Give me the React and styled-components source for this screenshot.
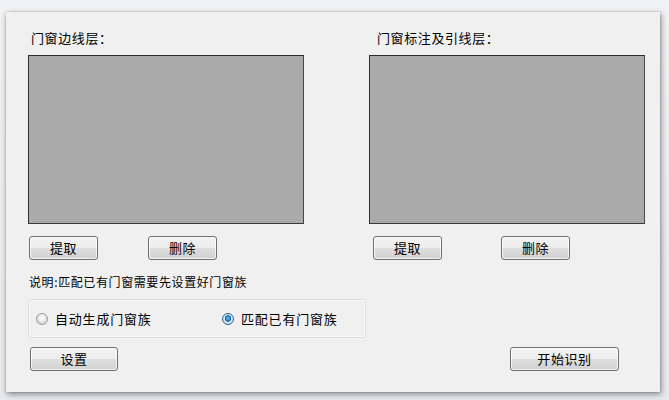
import React from "react"
import styled, { createGlobalStyle } from "styled-components"

const GlobalStyle = createGlobalStyle`
  html, body {
    margin: 0;
    padding: 0;
    background: #eceef1;
    font-family: "Noto Sans CJK SC", "Noto Sans", sans-serif;
    color: #000;
  }
  * {
    box-sizing: border-box;
  }
`

const Page = styled.div`
  width: 669px;
  height: 400px;
  padding: 12px 0 0 6px;
  background: linear-gradient(180deg, #f1f2f4 0%, #e8e9ec 100%);
`

const Window = styled.div`
  width: 654px;
  height: 380px;
  padding: 19px 0 0 22px;
  background: #f0f0f0;
  box-shadow: 1px 2px 6px rgba(0, 0, 0, 0.45), 0 0 1px rgba(0, 0, 0, 0.3);
  display: flex;
  flex-direction: column;
`

const Columns = styled.div`
  display: grid;
  grid-template-columns: 276px 276px;
  column-gap: 65px;
`

const Column = styled.div`
  display: flex;
  flex-direction: column;
`

const Label = styled.div`
  font-size: 13px;
  letter-spacing: 0.6px;
  line-height: 14px;
  height: 14px;
  padding-left: ${p => p.$indent}px;
  margin-bottom: 10px;
  white-space: nowrap;
`

const LayerBox = styled.div`
  height: 169px;
  background: #aaaaaa;
  border: 1px solid #2e2e2e;
  border-right-color: #4a4a4a;
  border-bottom-color: #3a3a3a;
`

const ButtonRow = styled.div`
  display: flex;
  margin-top: 12px;
  padding-left: ${p => p.$indent}px;
  gap: ${p => p.$gap}px;
`

const Button = styled.button`
  width: ${p => p.$w || 69}px;
  height: 24px;
  padding: 0;
  border: 1px solid #707070;
  border-radius: 3px;
  background: linear-gradient(
    180deg,
    #f4f4f4 0%,
    #ececec 48%,
    #dedede 52%,
    #d2d2d2 100%
  );
  box-shadow: inset 0 0 0 1px rgba(255, 255, 255, 0.7);
  font-family: "Noto Sans CJK SC", "Noto Sans", sans-serif;
  font-size: 13px;
  letter-spacing: 0.6px;
  line-height: 22px;
  color: #000;
  text-align: center;
`

const Note = styled.div`
  margin-top: 15px;
  font-size: 12px;
  letter-spacing: 0.6px;
  line-height: 14px;
  height: 14px;
  padding-left: 1px;
  white-space: nowrap;
`

const GroupBox = styled.div`
  margin-top: 10px;
  width: 338px;
  height: 39px;
  border: 1px solid #d9e1e8;
  border-radius: 3px;
  box-shadow: inset 0 0 0 1px #f8f9fa;
  display: grid;
  grid-template-columns: 186px auto;
  align-items: center;
  padding-left: 7px;
`

const RadioItem = styled.label`
  display: flex;
  align-items: center;
  gap: 7px;
  font-size: 13px;
  letter-spacing: 0.8px;
  line-height: 14px;
  white-space: nowrap;
`

const RadioDot = styled.span`
  width: 12px;
  height: 12px;
  border-radius: 50%;
  flex: none;
  border: 1px solid ${p => (p.$checked ? "#2c628b" : "#9a9a9a")};
  background: ${p =>
    p.$checked
      ? "radial-gradient(circle at 50% 45%, #6fc3f5 0%, #2a8ad4 28%, #0b4f8a 40%, #d8ecf8 46%, #b5d6ec 100%)"
      : "radial-gradient(circle at 50% 40%, #ffffff 0%, #f0f0f0 35%, #d6d6d6 70%, #c8c8c8 100%)"};
`

const Footer = styled.div`
  display: flex;
  justify-content: space-between;
  margin-top: 9px;
  padding-left: 2px;
  width: 591px;
`

const App = () => {
  return (
    <Page>
      <GlobalStyle />
      <Window>
        <Columns>
          <Column>
            <Label $indent={3}>门窗边线层：</Label>
            <LayerBox />
            <ButtonRow $indent={1} $gap={50}>
              <Button>提取</Button>
              <Button>删除</Button>
            </ButtonRow>
          </Column>
          <Column>
            <Label $indent={8}>门窗标注及引线层：</Label>
            <LayerBox />
            <ButtonRow $indent={4} $gap={59}>
              <Button>提取</Button>
              <Button>删除</Button>
            </ButtonRow>
          </Column>
        </Columns>
        <Note>说明:匹配已有门窗需要先设置好门窗族</Note>
        <GroupBox>
          <RadioItem>
            <RadioDot />
            自动生成门窗族
          </RadioItem>
          <RadioItem>
            <RadioDot $checked />
            匹配已有门窗族
          </RadioItem>
        </GroupBox>
        <Footer>
          <Button $w={88}>设置</Button>
          <Button $w={109}>开始识别</Button>
        </Footer>
      </Window>
    </Page>
  )
}

export default App
